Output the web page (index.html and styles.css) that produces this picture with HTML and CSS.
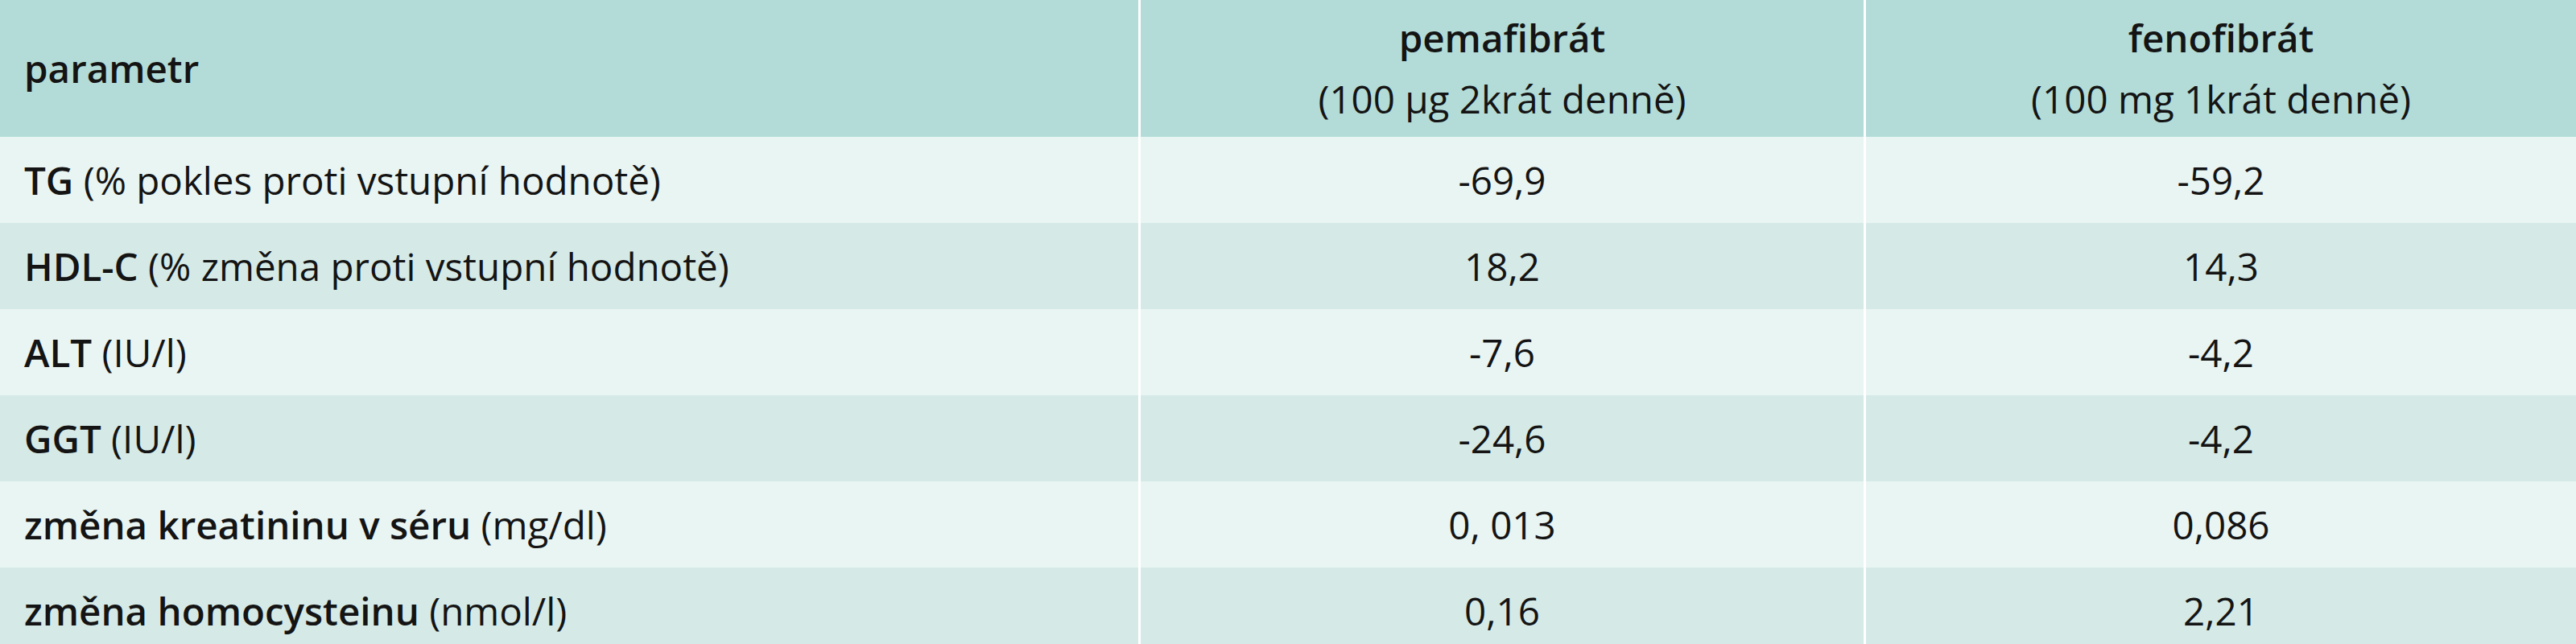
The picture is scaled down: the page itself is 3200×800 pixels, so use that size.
FILE: index.html
```html
<!DOCTYPE html>
<html lang="cs">
<head>
<meta charset="utf-8">
<title>pemafibrát vs fenofibrát</title>
<link rel="stylesheet" href="styles.css">
</head>
<body>
<div class="table">
  <div class="cell head first"><b>parametr</b></div>
  <div class="cell head num"><b>pemafibrát</b><span>(100 µg 2krát denně)</span></div>
  <div class="cell head num"><b>fenofibrát</b><span>(100 mg 1krát denně)</span></div>

  <div class="cell light first"><span><b>TG</b> (% pokles proti vstupní hodnotě)</span></div>
  <div class="cell light num">-69,9</div>
  <div class="cell light num">-59,2</div>

  <div class="cell dark first"><span><b>HDL-C</b> (% změna proti vstupní hodnotě)</span></div>
  <div class="cell dark num">18,2</div>
  <div class="cell dark num">14,3</div>

  <div class="cell light first"><span><b>ALT</b> (IU/l)</span></div>
  <div class="cell light num">-7,6</div>
  <div class="cell light num">-4,2</div>

  <div class="cell dark first"><span><b>GGT</b> (IU/l)</span></div>
  <div class="cell dark num">-24,6</div>
  <div class="cell dark num">-4,2</div>

  <div class="cell light first"><span><b>změna kreatininu v séru</b> (mg/dl)</span></div>
  <div class="cell light num">0, 013</div>
  <div class="cell light num">0,086</div>

  <div class="cell dark first"><span><b>změna homocysteinu</b> (nmol/l)</span></div>
  <div class="cell dark num">0,16</div>
  <div class="cell dark num">2,21</div>
</div>
</body>
</html>
```

FILE: styles.css
```css
html, body {
  margin: 0;
  padding: 0;
  background: #ffffff;
}

body {
  font-family: "Open Sans", "Noto Sans", "Liberation Sans", sans-serif;
  font-size: 47.5px;
  color: #141414;
  width: 3200px;
}

.table {
  display: grid;
  grid-template-columns: 1414px 898px 1fr;
  grid-template-rows: 170px repeat(6, 107px);
  column-gap: 3px;
  background: #ffffff;
}

.cell {
  display: flex;
  align-items: center;
  line-height: 76px;
  white-space: nowrap;
}

.cell b {
  font-weight: 600;
}

.first {
  padding-left: 30px;
}

.num {
  justify-content: center;
}

.head {
  background: #b3dcd8;
}

.head.num {
  flex-direction: column;
  justify-content: center;
  align-items: center;
}

.light {
  background: #e9f5f3;
}

.dark {
  background: #d5eae7;
}
```
